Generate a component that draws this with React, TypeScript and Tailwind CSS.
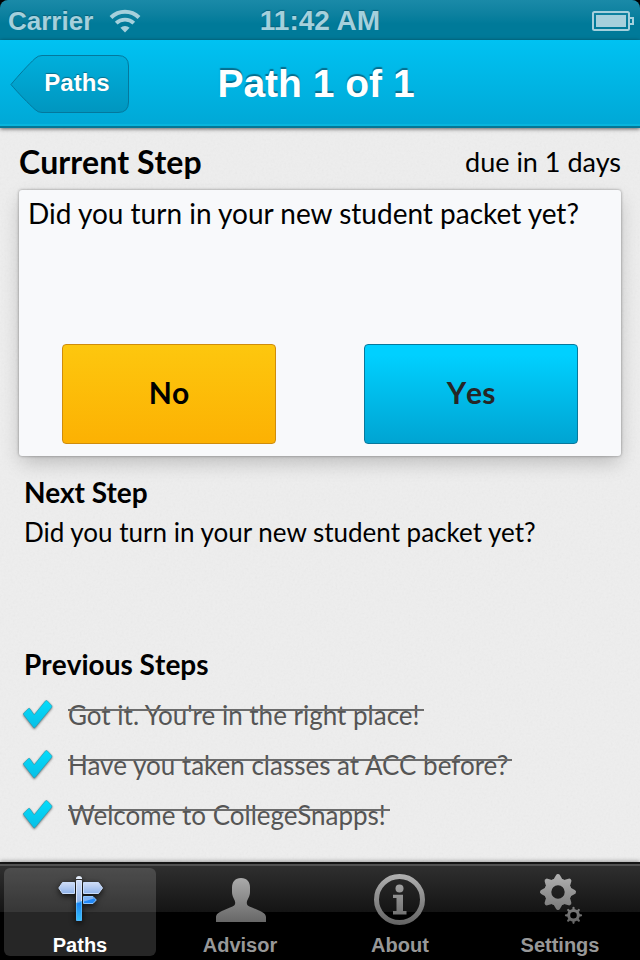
import type { ReactNode } from "react";

const GREY = "url(#tab-grey)";

function Gradients() {
  return (
    <svg width="0" height="0" className="absolute" aria-hidden="true">
      <defs>
        <linearGradient id="tab-grey" gradientUnits="userSpaceOnUse" x1="0" y1="0" x2="0" y2="56">
          <stop offset="0" stopColor="#b4b4b4" />
          <stop offset="1" stopColor="#5e5e5e" />
        </linearGradient>
        <linearGradient id="sign-pale" x1="0" y1="0" x2="0" y2="1">
          <stop offset="0" stopColor="#cfdcf5" />
          <stop offset="1" stopColor="#8fb3ea" />
        </linearGradient>
        <linearGradient id="sign-blue" x1="0" y1="0" x2="0" y2="1">
          <stop offset="0" stopColor="#1c7cf2" />
          <stop offset="1" stopColor="#35c2fb" />
        </linearGradient>
        <linearGradient id="check-blue" x1="0" y1="0" x2="0" y2="1">
          <stop offset="0" stopColor="#05dcfb" />
          <stop offset="1" stopColor="#08bfe6" />
        </linearGradient>
        <linearGradient id="back-fill" x1="0" y1="0" x2="0" y2="1">
          <stop offset="0" stopColor="#00afdc" />
          <stop offset="1" stopColor="#0096bf" />
        </linearGradient>
      </defs>
    </svg>
  );
}

function PaperGrain() {
  return (
    <svg className="pointer-events-none absolute inset-0 h-full w-full opacity-[0.07]" aria-hidden="true">
      <filter id="grain" x="0" y="0" width="100%" height="100%">
        <feTurbulence type="fractalNoise" baseFrequency="0.45" numOctaves="2" stitchTiles="stitch" />
        <feColorMatrix type="saturate" values="0" />
      </filter>
      <rect width="100%" height="100%" filter="url(#grain)" />
    </svg>
  );
}

function WifiIcon() {
  return (
    <svg width="32" height="24" viewBox="0 0 32 24" fill="none" stroke="#a5d0dc" strokeWidth="4" aria-hidden="true">
      <path d="M2 8.500a20 20 0 0 1 28 0" />
      <path d="M7.200 14.200a12.600 12.600 0 0 1 17.600 0" strokeWidth="3.800" />
      <path d="M16 23.400l-4.600-4.600a6.600 6.600 0 0 1 9.200 0z" fill="#a5d0dc" stroke="none" />
    </svg>
  );
}

function BatteryIcon() {
  return (
    <svg width="42" height="20" viewBox="0 0 42 20" fill="none" aria-hidden="true">
      <rect x="1" y="1" width="36" height="18" rx="1.500" stroke="#a5d0dc" strokeWidth="2" />
      <rect x="4" y="4" width="30" height="12" fill="#a5d0dc" />
      <path d="M38 7h3v6h-3" stroke="#a5d0dc" strokeWidth="2" />
    </svg>
  );
}

function StatusBar() {
  return (
    <div className="bg-black">
      <div className="grid h-10 grid-cols-3 items-center rounded-t-lg bg-linear-to-b from-[#1a8aa8] to-[#007a99] to-60% px-2 pb-[2px] font-bold text-[#a5d0dc] [text-shadow:0_-1px_1px_#0a5f78]">
        <div className="flex items-center gap-4">
          <span className="text-[26px]">Carrier</span>
          <WifiIcon />
        </div>
        <span className="text-center text-[28px]">11:42 AM</span>
        <div className="-mr-[2px] flex justify-end">
          <BatteryIcon />
        </div>
      </div>
    </div>
  );
}

function NavBar() {
  return (
    <header className="relative z-10 grid h-22 grid-cols-[120px_1fr_128px] items-center border-b-2 border-[#047796] bg-linear-to-b from-[#00c2f2] to-[#00a8d6] px-[10px] pt-[2px] shadow-[inset_0_-2px_0_#08b5dd,0_1px_4px_rgba(0,0,0,0.6)]">
      <button type="button" className="relative h-[58px] w-[120px] pb-[2px] pl-[14px] text-2xl font-bold text-white [text-shadow:0_-1px_1px_#0a6d8a]">
        <svg width="120" height="58" viewBox="0 0 120 58" className="absolute inset-0" aria-hidden="true">
          <path
            d="M1 29.500 C8 21 19 9 25 3.500 Q28 0.500 32 0.500 H108 Q118.500 0.500 118.500 11 V47 Q118.500 57.500 108 57.500 H32 Q28 57.500 25 54.500 C19 49 8 38 1 29.500z"
            fill="url(#back-fill)"
            stroke="#04789d"
          />
        </svg>
        <span className="relative">Paths</span>
      </button>
      <h1 className="pb-[2px] text-center text-[39px] leading-none font-bold whitespace-nowrap text-white [text-shadow:0_-2px_1px_#066c8c]">
        Path 1 of 1
      </h1>
    </header>
  );
}

function CheckIcon() {
  return (
    <svg width="32" height="32" viewBox="0 0 32 32" className="shrink-0 drop-shadow-[0_1px_1px_rgba(0,0,0,0.5)]" aria-hidden="true">
      <path
        d="M6.500 9.500L1.800 14 Q1 15 1.800 16L11.600 28.600Q12.300 29.200 13 28.600L29.600 8.500Q30.200 7.400 29.600 6.400L25.200 1.800Q24.400 1.200 23.600 1.800L12.200 15.800 7.800 9.600Q7.200 9 6.500 9.500z"
        fill="url(#check-blue)"
        stroke="#2a93aa"
        strokeWidth="0.600"
      />
    </svg>
  );
}

const previousSteps = [
  "Got it. You're in the right place!",
  "Have you taken classes at ACC before?",
  "Welcome to CollegeSnapps!",
];

function PreviousSteps() {
  return (
    <section className="mt-24 px-6">
      <h2 className="text-[28px] leading-9 font-bold [font-kerning:none]">Previous Steps</h2>
      <ul className="mt-2">
        {previousSteps.map((step) => (
          <li key={step} className="flex h-[50px] items-center text-[26px] leading-8 text-[#555]">
            <div className="mr-[14px] -ml-[2px] flex">
              <CheckIcon />
            </div>
            <s className="relative pr-1 no-underline after:absolute after:top-[10px] after:left-0 after:h-[2px] after:w-full after:bg-[#6c6c6c]">
              {step}
            </s>
          </li>
        ))}
      </ul>
    </section>
  );
}

function CurrentStep() {
  return (
    <section className="px-[19px] pt-4">
      <div className="flex items-center justify-between leading-9">
        <h2 className="text-[32px] font-bold [font-kerning:none]">Current Step</h2>
        <span className="text-[27px]">due in 1 days</span>
      </div>
      <div className="mt-[10px] flex h-[266px] flex-col justify-between rounded-[3px] bg-[#f8f9fb] px-[9px] pt-1 pb-3 shadow-[0_0_3px_rgba(0,0,0,0.4),0_8px_20px_-2px_rgba(0,0,0,0.22)]">
        <p className="text-[28px] leading-[38px]">Did you turn in your new student packet yet?</p>
        <div className="flex justify-between gap-6 px-[34px] text-[30px] font-bold [font-kerning:none]">
          <button type="button" className="h-25 w-[214px] rounded-[4px] border border-[#cf8c0c] bg-linear-to-b from-[#fdc70e] to-[#fcb103] pb-[3px] text-black">
            No
          </button>
          <button type="button" className="h-25 w-[214px] rounded-[4px] border border-[#08789c] bg-linear-to-b from-[#00d0ff] from-10% to-[#00a4d2] pb-[3px] text-[#262626]">
            Yes
          </button>
        </div>
      </div>
    </section>
  );
}

function NextStep() {
  return (
    <section className="mt-[18px] px-6">
      <h2 className="text-[28px] leading-9 font-bold">Next Step</h2>
      <p className="mt-1 text-[26px] leading-9">Did you turn in your new student packet yet?</p>
    </section>
  );
}

function SignpostIcon() {
  return (
    <svg width="56" height="56" viewBox="0 0 56 56" className="drop-shadow-[0_2px_3px_rgba(0,0,0,0.8)]" aria-hidden="true">
      <path d="M10.500 10.500H22.500V21.500H10.500L6.800 16z" fill="url(#sign-pale)" stroke="#c9dcfa" />
      <path d="M31.500 10.500H46.500L50.500 16 46.500 21.500H31.500z" fill="url(#sign-pale)" stroke="#c9dcfa" />
      <path d="M31.500 24.500H41L44.300 28 41 31.500H31.500z" fill="#2389f6" stroke="#8ec4fb" />
      <path d="M32 25H40.500L42 26.500 32 29.500z" fill="#7fb1f2" />
      <path d="M24.500 8.500H29.500V30L24.500 31.500z" fill="url(#sign-pale)" stroke="#dbe7fc" />
      <path d="M24.500 31L29.500 29.500V48.500H24.500z" fill="url(#sign-blue)" stroke="#4fb4fa" />
      <path d="M24 7V5.800Q24.600 4 27 4T30 5.800V7z" fill="#e4edfb" />
    </svg>
  );
}

function AdvisorIcon() {
  return (
    <svg width="56" height="56" viewBox="0 0 56 56" fill={GREY} aria-hidden="true">
      <path d="M29 6C35 6 38 10 38 15.500V20C38 25 35 27.500 34.800 30.500C34.800 33.500 36 34 40 35.500L47 38.500C51.500 40.500 54 42 54 45.500V50H4V45.500C4 42 6.500 40.500 11 38.500L18 35.500C22 34 23.200 33.500 23.200 30.500C23 27.500 20 25 20 20V15.500C20 10 23 6 29 6z" />
    </svg>
  );
}

function AboutIcon() {
  return (
    <svg width="56" height="56" viewBox="0 0 56 56" fill={GREY} aria-hidden="true">
      <circle cx="27.500" cy="27.500" r="23" fill="none" stroke={GREY} strokeWidth="5" />
      <circle cx="27.500" cy="16.500" r="4" />
      <path d="M21 22.800H31V39H34.500V42.500H21V39H24.500V26H21z" />
    </svg>
  );
}

const toothAngles = [0, 45, 90, 135, 180, 225, 270, 315];

function SettingsIcon() {
  return (
    <svg width="56" height="56" viewBox="0 0 56 56" aria-hidden="true">
      <mask id="gears" maskUnits="userSpaceOnUse" x="0" y="0" width="56" height="56">
        <g fill="none" stroke="#fff" strokeLinecap="round">
          <g transform="translate(26 20)">
            <circle r="10.200" strokeWidth="7" />
            {toothAngles.map((angle) => (
              <path key={angle} transform={`rotate(${angle})`} d="M-1.800 -12.500L0 -15.700L1.800 -12.500" strokeWidth="4.600" strokeLinejoin="round" />
            ))}
          </g>
          <g transform="translate(41.500 43.300)">
            <circle r="4.800" strokeWidth="3" />
            {toothAngles.map((angle) => (
              <path key={angle} transform={`rotate(${angle})`} d="M0 -5.500V-7.500" strokeWidth="2.200" />
            ))}
          </g>
        </g>
      </mask>
      <rect width="56" height="56" fill={GREY} mask="url(#gears)" />
    </svg>
  );
}

const tabs: { label: string; icon: ReactNode; active?: boolean }[] = [
  { label: "Paths", icon: <SignpostIcon />, active: true },
  { label: "Advisor", icon: <AdvisorIcon /> },
  { label: "About", icon: <AboutIcon /> },
  { label: "Settings", icon: <SettingsIcon /> },
];

function TabBar() {
  return (
    <nav className="grid h-[98px] shrink-0 grid-cols-4 border-t-2 border-[#151515] bg-[linear-gradient(#303030,#141414_48px,#000_48px)] font-['Liberation_Sans',Arial,sans-serif] shadow-[inset_0_2px_0_#515151,0_-1px_4px_rgba(0,0,0,0.35)]">
      {tabs.map((tab) => (
        <button
          key={tab.label}
          type="button"
          aria-current={tab.active ? "page" : undefined}
          className={
            tab.active
              ? "m-1 flex flex-col items-center rounded-md bg-white/15 pt-1 text-xl leading-[22px] font-bold text-white"
              : "m-1 flex flex-col items-center rounded-md pt-1 text-xl leading-[22px] font-bold text-[#989898]"
          }
        >
          {tab.icon}
          <span className="mt-[6px]">{tab.label}</span>
        </button>
      ))}
    </nav>
  );
}

export default function App() {
  return (
    <div className="flex min-h-screen flex-col bg-[#eeeeee] font-['Lato',sans-serif] text-black">
      <Gradients />
      <div className="font-['Liberation_Sans',Arial,sans-serif]">
        <StatusBar />
        <NavBar />
      </div>
      <main className="relative flex-1">
        <PaperGrain />
        <div className="relative">
          <CurrentStep />
          <NextStep />
          <PreviousSteps />
        </div>
      </main>
      <TabBar />
    </div>
  );
}
